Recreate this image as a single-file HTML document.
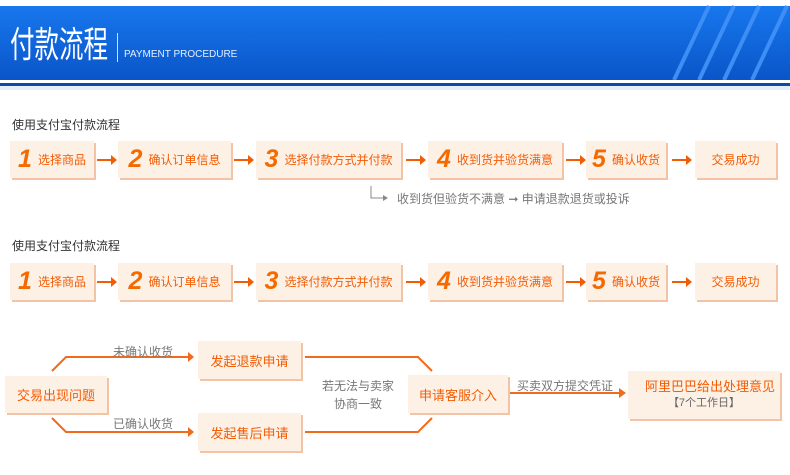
<!DOCTYPE html>
<html><head><meta charset="utf-8"><style>
*{margin:0;padding:0;box-sizing:border-box}
body{width:790px;height:475px;background:#fff;position:relative;overflow:hidden;font-family:"Liberation Sans","Noto Sans CJK SC",sans-serif}
.a{position:absolute}
.hdr{left:0;top:6px;width:790px;height:74px;background:linear-gradient(#1877ee,#0a55c8)}
.title{left:10px;top:22px;color:#fff;font-size:36px;line-height:46px;transform:scaleX(0.68);transform-origin:left top;white-space:nowrap}
.box{position:absolute;background:#fdf1e6;box-shadow:2px 2px 0 #f3c3a6;color:#f25c05;font-size:12px;display:flex;align-items:center;justify-content:center;white-space:nowrap}
.box b{font-style:italic;font-size:25px;font-weight:bold;color:#f56a00;margin-right:6px;font-family:"Liberation Sans",sans-serif}
.arr{position:absolute;width:18px;height:2px;background:#f25c05}
.arr:after{content:"";position:absolute;right:-2px;top:-4px;border-left:6px solid #f25c05;border-top:5px solid transparent;border-bottom:5px solid transparent}
.lbl{position:absolute;font-size:12px;color:#333}
.g{position:absolute;font-size:12px;color:#777;white-space:nowrap}
</style></head><body>
<div class="a hdr"></div>
<svg class="a" style="left:0;top:0" width="790" height="95">
<g stroke="#3d8ff6" stroke-width="4">
<line x1="709" y1="6" x2="674" y2="80"/><line x1="734" y1="6" x2="699" y2="80"/>
<line x1="759" y1="6" x2="724" y2="80"/><line x1="787" y1="6" x2="752" y2="80"/></g>
<rect x="0" y="80" width="790" height="3" fill="#fff"/>
<rect x="0" y="83" width="790" height="3" fill="#0b4aa8"/>
<rect x="0" y="86" width="790" height="4" fill="#e6eef8"/>
</svg>
<div class="a title">付款流程</div>
<div class="a" style="left:117px;top:33px;width:1px;height:29px;background:#cfe0ff"></div>
<div class="a" style="left:124px;top:49px;color:#e6efff;font-size:10px">PAYMENT PROCEDURE</div>

<div class="lbl" style="left:12px;top:116px">使用支付宝付款流程</div>
<div class="box" style="left:10px;top:141px;width:84px;height:37px"><b>1</b>选择商品</div>
<div class="arr" style="left:97px;top:159px"></div>
<div class="box" style="left:118px;top:141px;width:113px;height:37px"><b>2</b>确认订单信息</div>
<div class="arr" style="left:234px;top:159px"></div>
<div class="box" style="left:256px;top:141px;width:145px;height:37px"><b>3</b>选择付款方式并付款</div>
<div class="arr" style="left:406px;top:159px"></div>
<div class="box" style="left:428px;top:141px;width:134px;height:37px"><b>4</b>收到货并验货满意</div>
<div class="arr" style="left:566px;top:159px"></div>
<div class="box" style="left:586px;top:141px;width:80px;height:37px"><b>5</b>确认收货</div>
<div class="arr" style="left:672px;top:159px"></div>
<div class="box" style="left:695px;top:141px;width:81px;height:37px">交易成功</div>
<svg class="a" style="left:368px;top:184px" width="30" height="20"><path d="M3 2V14H16" stroke="#888" fill="none"/><path d="M15 11L20 14L15 17Z" fill="#888"/></svg>
<div class="g" style="left:397px;top:190px">收到货但验货不满意 <span style="color:#777">➞</span> 申请退款退货或投诉</div>

<div class="lbl" style="left:12px;top:237px">使用支付宝付款流程</div>
<div class="box" style="left:10px;top:263px;width:84px;height:37px"><b>1</b>选择商品</div>
<div class="arr" style="left:97px;top:281px"></div>
<div class="box" style="left:118px;top:263px;width:113px;height:37px"><b>2</b>确认订单信息</div>
<div class="arr" style="left:234px;top:281px"></div>
<div class="box" style="left:256px;top:263px;width:145px;height:37px"><b>3</b>选择付款方式并付款</div>
<div class="arr" style="left:406px;top:281px"></div>
<div class="box" style="left:428px;top:263px;width:134px;height:37px"><b>4</b>收到货并验货满意</div>
<div class="arr" style="left:566px;top:281px"></div>
<div class="box" style="left:586px;top:263px;width:80px;height:37px"><b>5</b>确认收货</div>
<div class="arr" style="left:672px;top:281px"></div>
<div class="box" style="left:695px;top:263px;width:81px;height:37px">交易成功</div>

<svg class="a" style="left:0;top:330px" width="790" height="140">
<g stroke="#f26a1b" stroke-width="2" fill="none">
<path d="M52 41L66 27H188"/><path d="M52 88L66 102H188"/>
<path d="M305 27H418L432 41"/><path d="M305 102H418L432 88"/>
<path d="M510 63H620"/></g>
<g fill="#f26a1b"><path d="M188 22L194 27L188 32Z"/><path d="M188 97L194 102L188 107Z"/><path d="M619 58L626 63L619 68Z"/></g>
</svg>
<div class="box" style="left:5px;top:376px;width:102px;height:37px;font-size:13px">交易出现问题</div>
<div class="box" style="left:198px;top:341px;width:103px;height:38px;font-size:13px">发起退款申请</div>
<div class="box" style="left:198px;top:413px;width:103px;height:38px;font-size:13px">发起售后申请</div>
<div class="g" style="left:113px;top:343px;font-size:12px">未确认收货</div>
<div class="g" style="left:113px;top:415px;font-size:12px">已确认收货</div>
<div class="g" style="left:322px;top:377px;font-size:12px;line-height:18px;text-align:center">若无法与卖家<br>协商一致</div>
<div class="box" style="left:408px;top:375px;width:100px;height:38px;font-size:13px">申请客服介入</div>
<div class="g" style="left:517px;top:377px;font-size:12px">买卖双方提交凭证</div>
<div class="box" style="left:628px;top:371px;width:152px;height:48px;flex-direction:column;font-size:13px;line-height:17px"><span style="margin-left:12px">阿里巴巴给出处理意见</span><span style="color:#666;font-size:11px">【7个工作日】</span></div>
</body></html>
